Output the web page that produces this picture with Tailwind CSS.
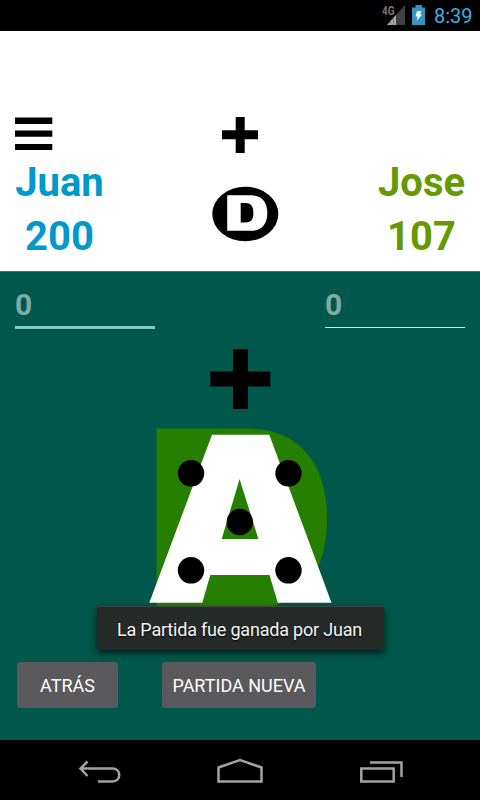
<!DOCTYPE html>
<html lang="es">
<head>
<meta charset="utf-8">
<title>Partida</title>
<script src="https://cdn.jsdelivr.net/npm/@tailwindcss/browser@4"></script>
</head>
<body class="w-[480px] h-[800px] overflow-hidden bg-black font-['Roboto',sans-serif]">
<div class="relative flex flex-col w-[480px] h-[800px]">
  <!-- Status bar -->
  <div class="h-[31px] bg-black flex justify-end pr-[7px] shrink-0">
    <svg width="46" height="31" viewBox="380 0 46 31" class="shrink-0 mr-[8px]">
      <path d="M405 5V25H387Z" fill="#404040"/>
      <path d="M396 15V25H387Z" fill="#aaa"/>
      <path d="M390.500 20V25M393.500 17V25" stroke="#666" stroke-width=".6"/>
      <text x="382" y="14.500" font-family="Roboto" font-size="12" font-weight="700" fill="#777" textLength="12.500" lengthAdjust="spacingAndGlyphs">4G</text>
      <path d="M412 7.500H415.500V5H422V7.500H425V25H412Z" fill="#3494bd"/>
      <path d="M417 11H421.500L420 14.500H422L416.500 21L417.800 16.500H415.500Z" fill="#fff"/>
    </svg>
    <span class="text-[20px] leading-[32px] text-[#33b5e5] w-[39px] whitespace-nowrap">8:39</span>
  </div>

  <!-- Score header -->
  <div class="h-[240px] bg-white shrink-0 flex justify-between pt-[86px] pl-[15px] pr-[15px]">
    <div class="w-[89px] flex flex-col items-center text-[#0099cc] font-bold text-[40px] leading-[54px]">
      <svg width="38" height="34" viewBox="0 0 38 34" class="self-start shrink-0">
        <path d="M0 .4H37.300V7H0ZM0 13.500H37.300V19.700H0ZM0 27H37.300V33H0Z"/>
      </svg>
      <div class="mt-[5px] whitespace-nowrap">Juan</div>
      <div class="whitespace-nowrap">200</div>
    </div>
    <svg width="68" height="130" viewBox="211 117 68 130" class="shrink-0 ml-[7px]">
      <path d="M235.700 117H244.700V130.300H258V139.300H244.700V153H235.700V139.300H222V130.300H235.700Z"/>
      <ellipse cx="245.300" cy="214" rx="33" ry="27.200"/>
      <path fill="#fff" fill-rule="evenodd" d="M227.200 195.300H251C262 195.300 267.300 202 267.300 213C267.300 224 262 230.800 251 230.800H227.200ZM240.700 203V222.500H245C251 222.500 253.400 219.500 253.400 213C253.400 206 251 203 245 203Z"/>
    </svg>
    <div class="w-[87px] pt-[39px] flex flex-col items-center text-[#669900] font-bold text-[40px] leading-[54px]">
      <div class="whitespace-nowrap">Jose</div>
      <div class="whitespace-nowrap">107</div>
    </div>
  </div>

  <!-- Board -->
  <div class="h-[469px] shrink-0 bg-[#00574b] border-t border-[#427b73] flex flex-col">
    <div class="flex justify-between px-[15px] pt-[13px] h-[70px] text-[30px] leading-[40px] font-bold text-[#80aba5]">
      <div class="w-[140px] h-[44px] border-b-[3px] border-[#80cbc4]">0</div>
      <div class="w-[140px] h-[43px] border-b border-[#d5e3e1]">0</div>
    </div>
    <svg width="200" height="270" viewBox="140 342 200 270" class="self-center shrink-0">
      <path d="M233 349.300H248V371.500H270.300V386.600H248V409H233V386.600H210.300V371.500H233Z"/>
      <path fill="#267f00" d="M156.500 428.500H247C300 428.500 327 464 327 519C327 574 300 609.500 247 609.500H156.500Z"/>
      <path fill="#fff" fill-rule="evenodd" d="M212 434.700H269.300L331.500 602.700H277.800L269.500 575H210.300L202.300 602.700H149.300ZM239.600 479L221.700 539H258.400Z"/>
      <circle cx="191" cy="473.300" r="13.200"/>
      <circle cx="288.500" cy="473.300" r="13.200"/>
      <circle cx="239.800" cy="522" r="13.200"/>
      <circle cx="191" cy="570.300" r="13.200"/>
      <circle cx="288.500" cy="570.300" r="13.200"/>
    </svg>
    <div class="flex pl-[17px] pt-[50px] gap-[44px] text-white text-[18px]">
      <div class="w-[101px] h-[46px] rounded-[3px] bg-[#5a595b] flex items-center justify-center pt-[1px]"><span class="whitespace-nowrap">ATRÁS</span></div>
      <div class="w-[154px] h-[46px] rounded-[3px] bg-[#5a595b] flex items-center justify-center pt-[1px]"><span class="whitespace-nowrap">PARTIDA NUEVA</span></div>
    </div>
  </div>

  <!-- Navigation bar -->
  <div class="h-[60px] bg-black shrink-0">
    <svg width="480" height="60" viewBox="0 740 480 60" fill="none" stroke="#a3a3a3" stroke-width="2.500">
      <path d="M80.500 768.500H112.500C121.500 768.500 121.500 781.400 112.500 781.400H98M87.500 761.500L80.500 768.500L87.500 776"/>
      <path d="M218.500 781.500V767.500L240 760L261.500 767.500V781.500Z"/>
      <path d="M361.300 768.500H393.700V781.500H361.300ZM370 762.500H401.500V777"/>
    </svg>
  </div>

  <!-- Toast -->
  <div class="absolute left-[97px] top-[606px] w-[287px] h-[44px] rounded-[2px] bg-[#272929]/97 border-t border-[#414343] shadow-[0_3px_7px_rgba(0,0,0,0.65)] flex items-center justify-center text-[#f5f5f5] text-[18px] pt-px pr-[2px]">
    <span class="whitespace-nowrap tracking-[-0.2px] [text-shadow:0_1px_2px_#000]">La Partida fue ganada por Juan</span>
  </div>
</div>
</body>
</html>
